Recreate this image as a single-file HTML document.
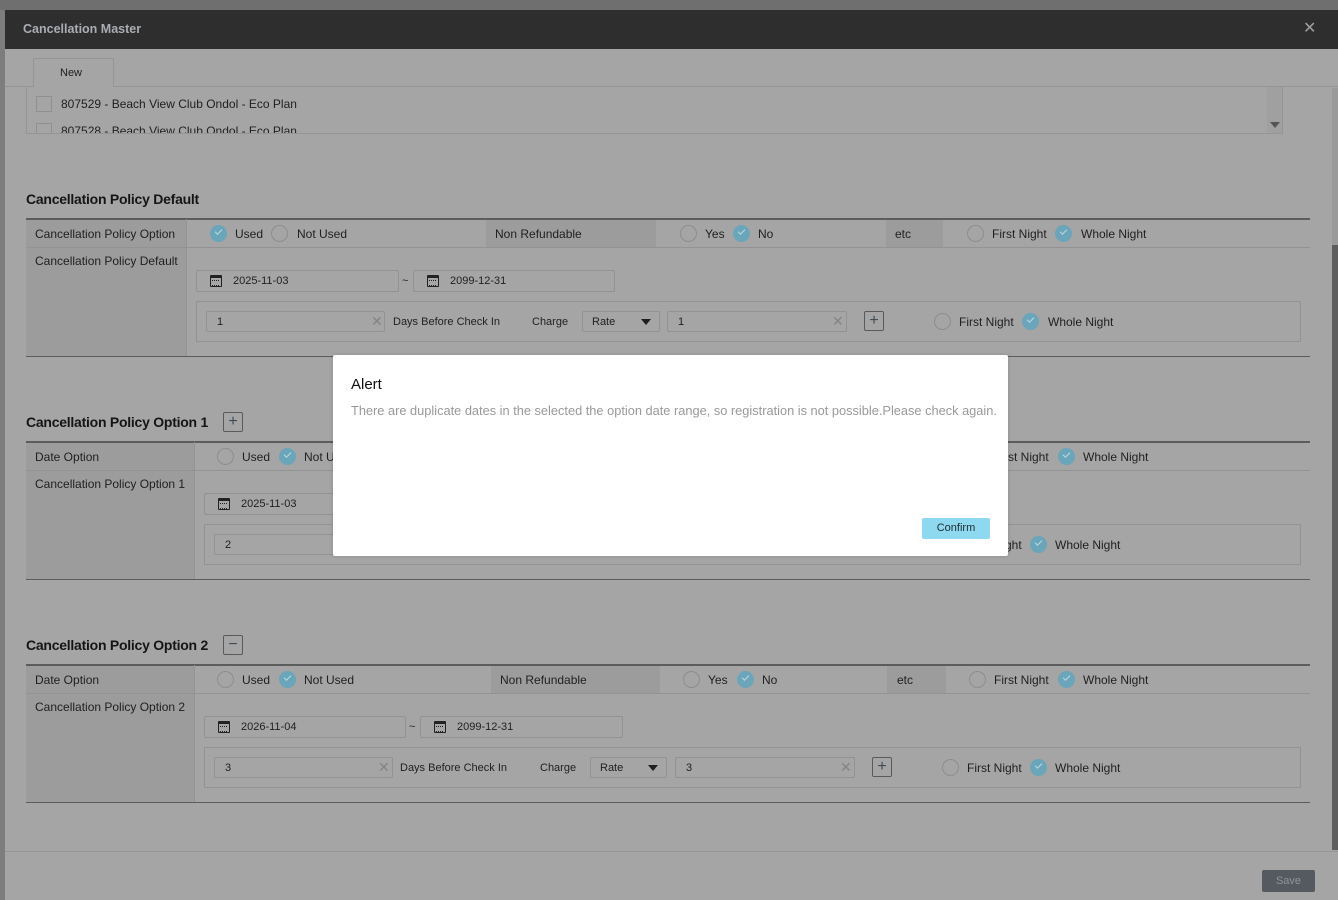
<!DOCTYPE html>
<html><head><meta charset="utf-8"><style>
*{box-sizing:border-box;margin:0;padding:0}
body{width:1338px;height:900px;overflow:hidden;background:#9a9a9a;font-family:"Liberation Sans",Arial,sans-serif;position:relative}
.a{position:absolute}
.t{position:absolute;font-size:12px;line-height:14px;color:#1f1f1f;white-space:nowrap}
.s{font-size:11px}
.r{position:absolute;width:17px;height:17px;border-radius:50%;border:1px solid #8d8d8d}
.rc{position:absolute;width:17px;height:17px;border-radius:50%;background:#6aa5ba}
.rc:after{content:"";position:absolute;left:5px;top:4px;width:6px;height:3px;border-left:1.6px solid #b9dbe5;border-bottom:1.6px solid #b9dbe5;transform:rotate(-45deg)}
.in{position:absolute;border:1px solid #929292;border-radius:2px}
.box{position:absolute;border:1px solid #939393}
.x{position:absolute;font-size:14px;color:#848484;line-height:14px}
.pb{position:absolute;width:20px;height:20px;border:1px solid #5a5a5a;border-radius:2px;color:#404a55;font-size:16px;line-height:17px;text-align:center}
.h{position:absolute;font-size:14px;font-weight:bold;letter-spacing:-0.25px;color:#151515;white-space:nowrap}
.cal{position:absolute;width:12px;height:12px;border:1.5px solid #222;border-top-width:3px;border-radius:1px}
.cal:before{content:"";position:absolute;left:1px;top:2px;width:7px;height:4px;border-top:1.5px dotted #222;border-bottom:1.5px dotted #222}
.lc{position:absolute;background:#9c9c9c}
.hl{position:absolute;height:1px;background:#939393}
.tl{position:absolute;height:2px;background:#5c5c5c}
.arr{position:absolute;width:0;height:0;border-left:5px solid transparent;border-right:5px solid transparent;border-top:6px solid #1f1f1f}
</style></head><body>
<div class="a" style="left:0;top:0;width:1338px;height:10px;background:#6f6f6f"></div>
<div class="a" style="left:0;top:10px;width:5px;height:890px;background:#7d7d7d"></div>
<div class="a" style="left:5px;top:10px;width:1333px;height:890px;background:#a5a5a5"></div>
<div class="a" style="left:5px;top:10px;width:1333px;height:39px;background:#2e2e2e"></div>
<div class="t" style="left:23px;top:22px;font-size:12.5px;font-weight:bold;color:#a9adb3">Cancellation Master</div>
<div class="a" style="left:1303px;top:21px;font-size:16px;color:#9f9f9f;line-height:16px">✕</div>

<div class="hl" style="left:5px;top:86px;width:1333px;background:#959595"></div>
<div class="a" style="left:33px;top:58px;width:81px;height:29px;background:#a5a5a5;border:1px solid #959595;border-bottom:none;border-radius:2px 2px 0 0"></div>
<div class="t s" style="left:60px;top:66px">New</div>
<div class="a" style="left:26px;top:87px;width:1257px;height:47px;border:1px solid #959595;border-top:none;overflow:hidden">
 <div class="a" style="left:9px;top:9px;width:16px;height:16px;border:1px solid #909090"></div>
 <div class="t" style="left:34px;top:10px">807529 - Beach View Club Ondol - Eco Plan</div>
 <div class="a" style="left:9px;top:36px;width:16px;height:16px;border:1px solid #909090"></div>
 <div class="t" style="left:34px;top:37px">807528 - Beach View Club Ondol - Eco Plan</div>
 <div class="a" style="left:1240px;top:0;width:16px;height:47px;background:#a0a0a0"></div>
 <div class="arr" style="left:1243px;top:35px;border-top-color:#555"></div>
</div>
<div class="a" style="left:1332px;top:88px;width:6px;height:762px;background:#9a9a9a"></div>
<div class="a" style="left:1332px;top:245px;width:6px;height:605px;background:#5d5d5d"></div>

<div class="h" style="left:26px;top:191px">Cancellation Policy Default</div>
<div class="lc" style="left:26px;top:219px;width:160px;height:137px"></div>
<div class="lc" style="left:486px;top:219px;width:170px;height:28px"></div>
<div class="lc" style="left:886px;top:219px;width:57px;height:28px"></div>
<div class="tl" style="left:26px;top:218px;width:1284px"></div>
<div class="hl" style="left:26px;top:247px;width:1284px"></div>
<div class="hl" style="left:26px;top:356px;width:1284px;background:#5c5c5c"></div>
<div class="a" style="left:186px;top:219px;width:1px;height:137px;background:#939393"></div>
<div class="t" style="left:35px;top:227px">Cancellation Policy Option</div>
<div class="rc" style="left:210px;top:225px"></div><div class="t" style="left:235px;top:227px">Used</div>
<div class="r" style="left:271px;top:225px"></div><div class="t" style="left:297px;top:227px">Not Used</div>
<div class="t" style="left:495px;top:227px">Non Refundable</div>
<div class="r" style="left:680px;top:225px"></div><div class="t" style="left:705px;top:227px">Yes</div>
<div class="rc" style="left:733px;top:225px"></div><div class="t" style="left:758px;top:227px">No</div>
<div class="t" style="left:895px;top:227px">etc</div>
<div class="r" style="left:967px;top:225px"></div><div class="t" style="left:992px;top:227px">First Night</div>
<div class="rc" style="left:1055px;top:225px"></div><div class="t" style="left:1081px;top:227px">Whole Night</div>
<div class="t" style="left:35px;top:254px">Cancellation Policy Default</div>
<div class="in" style="left:196px;top:270px;width:203px;height:22px"></div><div class="cal" style="left:210px;top:275px"></div><div class="t s" style="left:233px;top:274px">2025-11-03</div>
<div class="t s" style="left:402px;top:274px">~</div>
<div class="in" style="left:413px;top:270px;width:202px;height:22px"></div><div class="cal" style="left:427px;top:275px"></div><div class="t s" style="left:450px;top:274px">2099-12-31</div>
<div class="box" style="left:196px;top:301px;width:1105px;height:41px"></div>
<div class="in" style="left:206px;top:311px;width:179px;height:21px"></div><div class="t s" style="left:217px;top:315px">1</div><div class="x" style="left:371px;top:314px">✕</div>
<div class="t s" style="left:393px;top:315px">Days Before Check In</div>
<div class="t s" style="left:532px;top:315px">Charge</div>
<div class="in" style="left:582px;top:311px;width:78px;height:21px"></div><div class="t s" style="left:592px;top:315px">Rate</div><div class="arr" style="left:641px;top:319px"></div>
<div class="in" style="left:667px;top:311px;width:180px;height:21px"></div><div class="t s" style="left:678px;top:315px">1</div><div class="x" style="left:832px;top:314px">✕</div>
<div class="pb" style="left:864px;top:311px">+</div>
<div class="r" style="left:934px;top:313px"></div><div class="t" style="left:959px;top:315px">First Night</div>
<div class="rc" style="left:1022px;top:313px"></div><div class="t" style="left:1048px;top:315px">Whole Night</div>

<div class="h" style="left:26px;top:414px">Cancellation Policy Option 1</div>
<div class="pb" style="left:223px;top:412px">+</div>
<div class="lc" style="left:26px;top:442px;width:168px;height:137px"></div>
<div class="lc" style="left:491px;top:442px;width:169px;height:28px"></div>
<div class="lc" style="left:887px;top:442px;width:59px;height:28px"></div>
<div class="tl" style="left:26px;top:441px;width:1284px"></div>
<div class="hl" style="left:26px;top:470px;width:1284px"></div>
<div class="hl" style="left:26px;top:579px;width:1284px;background:#5c5c5c"></div>
<div class="a" style="left:194px;top:442px;width:1px;height:137px;background:#939393"></div>
<div class="t" style="left:35px;top:450px">Date Option</div>
<div class="r" style="left:217px;top:448px"></div><div class="t" style="left:242px;top:450px">Used</div>
<div class="rc" style="left:279px;top:448px"></div><div class="t" style="left:304px;top:450px">Not Used</div>
<div class="r" style="left:969px;top:448px"></div><div class="t" style="left:994px;top:450px">First Night</div>
<div class="rc" style="left:1058px;top:448px"></div><div class="t" style="left:1083px;top:450px">Whole Night</div>
<div class="t" style="left:35px;top:477px">Cancellation Policy Option 1</div>
<div class="in" style="left:204px;top:493px;width:202px;height:22px"></div><div class="cal" style="left:218px;top:498px"></div><div class="t s" style="left:241px;top:497px">2025-11-03</div>
<div class="box" style="left:204px;top:524px;width:1097px;height:41px"></div>
<div class="in" style="left:214px;top:534px;width:179px;height:21px"></div><div class="t s" style="left:225px;top:538px">2</div>
<div class="r" style="left:942px;top:536px"></div><div class="t" style="left:967px;top:538px">First Night</div>
<div class="rc" style="left:1030px;top:536px"></div><div class="t" style="left:1055px;top:538px">Whole Night</div>

<div class="h" style="left:26px;top:637px">Cancellation Policy Option 2</div>
<div class="pb" style="left:223px;top:635px">−</div>
<div class="lc" style="left:26px;top:665px;width:168px;height:137px"></div>
<div class="lc" style="left:491px;top:665px;width:169px;height:28px"></div>
<div class="lc" style="left:887px;top:665px;width:59px;height:28px"></div>
<div class="tl" style="left:26px;top:664px;width:1284px"></div>
<div class="hl" style="left:26px;top:693px;width:1284px"></div>
<div class="hl" style="left:26px;top:802px;width:1284px;background:#5c5c5c"></div>
<div class="a" style="left:194px;top:665px;width:1px;height:137px;background:#939393"></div>
<div class="t" style="left:35px;top:673px">Date Option</div>
<div class="r" style="left:217px;top:671px"></div><div class="t" style="left:242px;top:673px">Used</div>
<div class="rc" style="left:279px;top:671px"></div><div class="t" style="left:304px;top:673px">Not Used</div>
<div class="t" style="left:500px;top:673px">Non Refundable</div>
<div class="r" style="left:683px;top:671px"></div><div class="t" style="left:708px;top:673px">Yes</div>
<div class="rc" style="left:737px;top:671px"></div><div class="t" style="left:762px;top:673px">No</div>
<div class="t" style="left:897px;top:673px">etc</div>
<div class="r" style="left:969px;top:671px"></div><div class="t" style="left:994px;top:673px">First Night</div>
<div class="rc" style="left:1058px;top:671px"></div><div class="t" style="left:1083px;top:673px">Whole Night</div>
<div class="t" style="left:35px;top:700px">Cancellation Policy Option 2</div>
<div class="in" style="left:204px;top:716px;width:202px;height:22px"></div><div class="cal" style="left:218px;top:721px"></div><div class="t s" style="left:241px;top:720px">2026-11-04</div>
<div class="t s" style="left:409px;top:720px">~</div>
<div class="in" style="left:420px;top:716px;width:203px;height:22px"></div><div class="cal" style="left:434px;top:721px"></div><div class="t s" style="left:457px;top:720px">2099-12-31</div>
<div class="box" style="left:204px;top:747px;width:1097px;height:41px"></div>
<div class="in" style="left:214px;top:757px;width:179px;height:21px"></div><div class="t s" style="left:225px;top:761px">3</div><div class="x" style="left:378px;top:760px">✕</div>
<div class="t s" style="left:400px;top:761px">Days Before Check In</div>
<div class="t s" style="left:540px;top:761px">Charge</div>
<div class="in" style="left:590px;top:757px;width:77px;height:21px"></div><div class="t s" style="left:600px;top:761px">Rate</div><div class="arr" style="left:648px;top:765px"></div>
<div class="in" style="left:675px;top:757px;width:180px;height:21px"></div><div class="t s" style="left:686px;top:761px">3</div><div class="x" style="left:840px;top:760px">✕</div>
<div class="pb" style="left:872px;top:757px">+</div>
<div class="r" style="left:942px;top:759px"></div><div class="t" style="left:967px;top:761px">First Night</div>
<div class="rc" style="left:1030px;top:759px"></div><div class="t" style="left:1055px;top:761px">Whole Night</div>

<div class="hl" style="left:5px;top:851px;width:1333px;background:#959595"></div>
<div class="a" style="left:1262px;top:870px;width:53px;height:22px;background:#555a61;border-radius:2px;color:#8f949a;font-size:11px;line-height:22px;text-align:center">Save</div>

<div class="a" style="left:333px;top:355px;width:675px;height:201px;background:#fff;border-radius:2px;box-shadow:0 0 4px rgba(0,0,0,.15)"></div>
<div class="t" style="left:351px;top:376px;font-size:15px;line-height:17px;color:#111">Alert</div>
<div class="t" style="left:351px;top:404px;font-size:12.8px;color:#999">There are duplicate dates in the selected the option date range, so registration is not possible.Please check again.</div>
<div class="a" style="left:922px;top:518px;width:68px;height:21px;background:#8fd9f0;border-radius:2px;font-size:11px;line-height:21px;text-align:center;color:#1b2b33">Confirm</div>
</body></html>
